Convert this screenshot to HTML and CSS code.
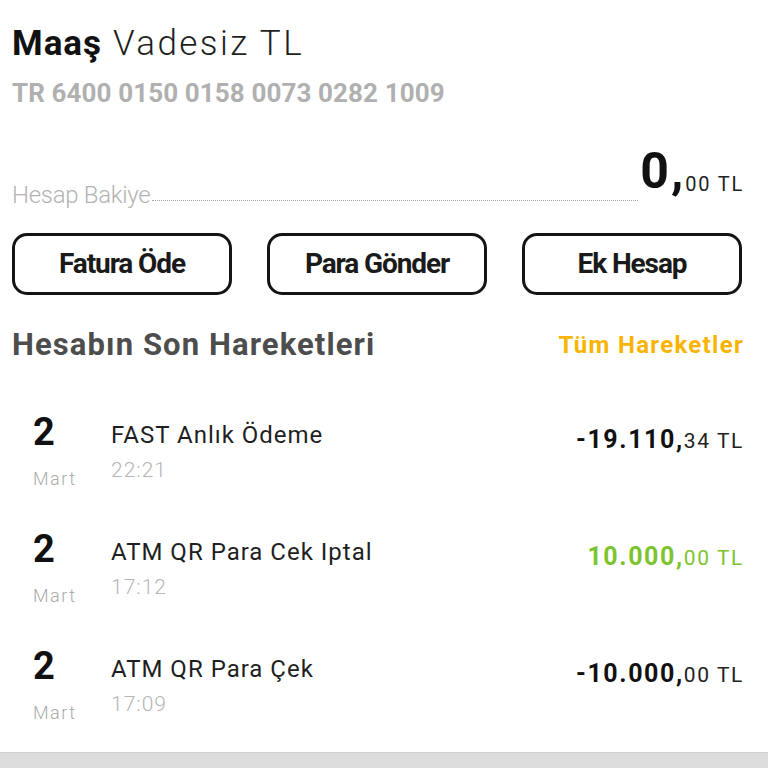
FILE: index.html
```html
<!DOCTYPE html>
<html lang="tr">
<head>
<meta charset="utf-8">
<link rel="stylesheet" href="styles.css">
</head>
<body>
<div class="page">
  <header class="account">
    <h1 class="title"><b>Maaş</b> Vadesiz TL</h1>
    <div class="iban">TR 6400 0150 0158 0073 0282 1009</div>
  </header>
  <div class="balance">
    <span class="bal-label">Hesap Bakiye</span>
    <span class="dots"></span>
    <span class="big">0,</span>
    <span class="small">00 TL</span>
  </div>
  <div class="actions">
    <button class="btn">Fatura Öde</button>
    <button class="btn">Para Gönder</button>
    <button class="btn">Ek Hesap</button>
  </div>
  <div class="section-head">
    <h2>Hesabın Son Hareketleri</h2>
    <a class="all">Tüm Hareketler</a>
  </div>
  <ul class="tx-list">
    <li class="tx">
      <div class="date"><span class="day">2</span><span class="month">Mart</span></div>
      <div class="info"><span class="name">FAST Anlık Ödeme</span><span class="time">22:21</span></div>
      <div class="amount"><b>-19.110,</b>34 TL</div>
    </li>
    <li class="tx">
      <div class="date"><span class="day">2</span><span class="month">Mart</span></div>
      <div class="info"><span class="name">ATM QR Para Cek Iptal</span><span class="time">17:12</span></div>
      <div class="amount pos"><b>10.000,</b>00 TL</div>
    </li>
    <li class="tx">
      <div class="date"><span class="day">2</span><span class="month">Mart</span></div>
      <div class="info"><span class="name">ATM QR Para Çek</span><span class="time">17:09</span></div>
      <div class="amount"><b>-10.000,</b>00 TL</div>
    </li>
  </ul>
  <div class="footer-bar"></div>
</div>
</body>
</html>
```
FILE: styles.css
```css
* { box-sizing: border-box; margin: 0; padding: 0; }
html, body { width: 768px; height: 768px; overflow: hidden; background: #fff; }
body { font-family: Roboto, "Liberation Sans", sans-serif; color: #1a1a1a; }
.page { display: flex; flex-direction: column; height: 768px; padding: 26px 24px 0 12px; }

.title { font-size: 35px; font-weight: 300; color: #1f1f1f; line-height: 1; letter-spacing: 2.4px; white-space: nowrap; }
.title b { font-weight: 700; color: #111; letter-spacing: 1px; }
.iban { font-size: 26px; font-weight: 700; color: #b0b0b0; line-height: 1; margin-top: 19px; letter-spacing: 0.1px; }

.balance { display: flex; align-items: flex-start; margin-top: 40px; height: 61px; }
.bal-label { font-size: 24px; font-weight: 300; color: #b3b3b3; line-height: 1; margin-top: 37px; letter-spacing: -0.3px; }
.dots { flex: 1; margin: 54px 2px 0 2px; border-bottom: 1px dotted #a5a5a5; }
.big { font-size: 50px; font-weight: 700; line-height: 1; color: #111; letter-spacing: 2px; }
.small { font-size: 20px; line-height: 1; color: #222; margin-top: 28px; letter-spacing: 1.8px; }

.actions { display: grid; grid-template-columns: repeat(3, 220px); justify-content: space-between; margin-top: 26px; margin-right: 2px; }
.btn { height: 62px; border: 3px solid #141414; border-radius: 15px; background: #fff; font-family: Roboto, "Liberation Sans", sans-serif; font-size: 28px; font-weight: 700; color: #1a1a1a; letter-spacing: -1.1px; line-height: 1; }

.section-head { display: flex; justify-content: space-between; align-items: flex-start; margin-top: 34px; }
.section-head h2 { font-size: 31px; font-weight: 700; color: #4d4d4d; line-height: 1; letter-spacing: 1.1px; }
.all { font-size: 24px; font-weight: 700; color: #f8b400; line-height: 1; margin-top: 4px; letter-spacing: 1.3px; }

.tx-list { list-style: none; margin-top: 50px; height: 342px; }
.tx { display: flex; align-items: flex-start; height: 117px; }
.tx:last-child { height: auto; }
.date { width: 99px; padding-left: 21px; display: flex; flex-direction: column; }
.day { font-size: 38px; font-weight: 700; color: #111; line-height: 1; margin-top: 3px; letter-spacing: 1px; }
.month { font-size: 18px; font-weight: 300; color: #ababab; line-height: 1; margin-top: 19px; letter-spacing: 1.5px; }
.info { flex: 1; display: flex; flex-direction: column; }
.name { font-size: 24px; color: #1f1f1f; line-height: 1; margin-top: 13px; letter-spacing: 1px; }
.time { font-size: 21px; font-weight: 300; color: #b5b5b5; line-height: 1; margin-top: 13px; letter-spacing: 1px; }
.amount { font-size: 21px; line-height: 25px; color: #222; margin-top: 17px; letter-spacing: 1.6px; white-space: nowrap; }
.amount b { font-size: 25px; line-height: 25px; font-weight: 700; color: #111; letter-spacing: 1.6px; }
.amount.pos, .amount.pos b { color: #7cc42e; }

.footer-bar { margin: 0 -24px 0 -12px; height: 16px; background: #dddddd; border-top: 1px solid #d2d2d2; }
```
